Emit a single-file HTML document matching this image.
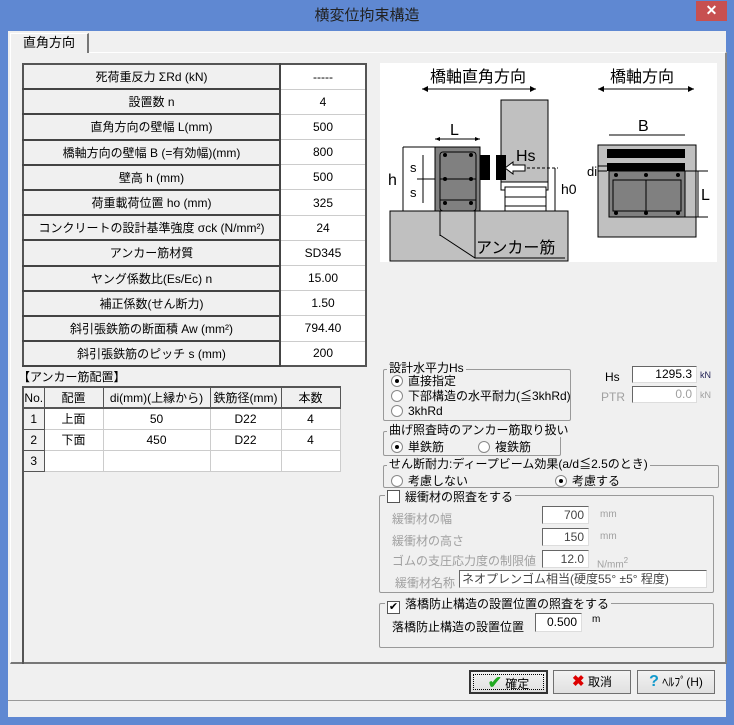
<!DOCTYPE html>
<html><head><meta charset="utf-8"><style>
*{box-sizing:border-box;margin:0;padding:0}
body{width:734px;height:725px;background:#5f88d2;font-family:"Liberation Sans","Noto Sans CJK JP",sans-serif;font-size:12px;color:#000;position:relative;overflow:hidden}
.a{position:absolute}
.win{left:8px;top:31px;width:718px;height:686px;background:#f0f0f0}
.title{left:0;top:0;width:734px;height:31px;text-align:center;font-size:15px;line-height:31px;color:#222}
.close{left:696px;top:1px;width:31px;height:20px;background:#c75050;color:#fff;text-align:center;line-height:19px;font-size:14px;font-weight:bold}
.tab{left:10px;top:33px;width:79px;height:20px;border-top:1px solid #fff;border-left:1px solid #fff;border-right:2px solid #777;font-size:13px;line-height:18px;padding-left:12px;background:#f0f0f0;z-index:2}
.panel{left:10px;top:52px;width:717px;height:612px;border-top:1px solid #fff;border-left:1px solid #fff;border-right:2px solid #888;border-bottom:2px solid #777}
table{border-collapse:collapse;position:absolute}
.t1{left:22px;top:63px;border:2px solid #555}
.t1 td{height:25.2px;font-size:12px;text-align:center;padding:0}
.t1 td.l{width:257px;background:#f0f0f0;border:1px solid #fff;border-right:2px solid #444;border-bottom:2px solid #444}
.t1 td.v{width:86px;background:#fff;border-bottom:1px solid #ccc}
.t2{left:22px;top:386px;border-left:2px solid #555;border-top:2px solid #555}
.t2 td{height:21px;text-align:center;border:1px solid #ccc;background:#fff;padding:0}
.t2 td.h{background:#f0f0f0;border:1px solid #fff;border-right:1px solid #555;border-bottom:2px solid #555}
.grp{border:1px solid #999;border-radius:2px}
.gl{background:#f0f0f0;padding:0 2px;font-size:12px;line-height:13px}
.rd{display:inline-block;width:12px;height:12px;border-radius:50%;border:1px solid #888;background:#fff;vertical-align:-2px;margin-right:5px;position:relative}
.rd.on::after{content:"";position:absolute;left:3px;top:3px;width:4px;height:4px;border-radius:50%;background:#000}
.cb{display:inline-block;width:13px;height:13px;border:1px solid #555;background:#fff;vertical-align:-2px;margin-right:5px;font-size:11px;line-height:11px;text-align:center}
.in{background:#fff;border-top:1px solid #666;border-left:1px solid #666;border-right:1px solid #ddd;border-bottom:1px solid #ddd;text-align:right;padding-right:4px;font-size:12px}
.gray{color:#a0a0a0}
.btn{height:24px;border:1px solid #707070;background:linear-gradient(#f2f2f2,#e0e0e0);text-align:center;line-height:22px;font-size:12px}
</style></head><body>
<div class="a title">横変位拘束構造</div>
<div class="a close">✕</div>
<div class="a win"></div>
<div class="a panel"></div>
<div class="a tab">直角方向</div>

<table class="t1">
<tr><td class="l">死荷重反力 ΣRd (kN)</td><td class="v">-----</td></tr>
<tr><td class="l">設置数 n</td><td class="v">4</td></tr>
<tr><td class="l">直角方向の壁幅 L(mm)</td><td class="v">500</td></tr>
<tr><td class="l">橋軸方向の壁幅 B (=有効幅)(mm)</td><td class="v">800</td></tr>
<tr><td class="l">壁高 h (mm)</td><td class="v">500</td></tr>
<tr><td class="l">荷重載荷位置 ho (mm)</td><td class="v">325</td></tr>
<tr><td class="l">コンクリートの設計基準強度 σck (N/mm²)</td><td class="v">24</td></tr>
<tr><td class="l">アンカー筋材質</td><td class="v">SD345</td></tr>
<tr><td class="l">ヤング係数比(Es/Ec) n</td><td class="v">15.00</td></tr>
<tr><td class="l">補正係数(せん断力)</td><td class="v">1.50</td></tr>
<tr><td class="l">斜引張鉄筋の断面積 Aw (mm²)</td><td class="v">794.40</td></tr>
<tr><td class="l">斜引張鉄筋のピッチ s (mm)</td><td class="v">200</td></tr>
</table>

<div class="a" style="left:18px;top:368px;font-size:12px">【アンカー筋配置】</div>
<div class="a" style="left:22px;top:386px;width:2px;height:278px;background:#555"></div>
<table class="t2">
<tr><td class="h" style="width:21px">No.</td><td class="h" style="width:59px">配置</td><td class="h" style="width:107px">di(mm)(上縁から)</td><td class="h" style="width:71px">鉄筋径(mm)</td><td class="h" style="width:59px">本数</td></tr>
<tr><td class="h" style="border-bottom:1px solid #555">1</td><td>上面</td><td>50</td><td>D22</td><td>4</td></tr>
<tr><td class="h" style="border-bottom:1px solid #555">2</td><td>下面</td><td>450</td><td>D22</td><td>4</td></tr>
<tr><td class="h" style="border-bottom:1px solid #555">3</td><td></td><td></td><td></td><td></td></tr>
</table>

<svg class="a" style="left:380px;top:63px" width="337" height="199" viewBox="0 0 337 199">
<rect width="337" height="199" fill="#fff"/>
<g font-family="Liberation Sans,Noto Sans CJK JP,sans-serif" fill="#000">
<text x="50" y="19" font-size="16">橋軸直角方向</text>
<text x="230" y="19" font-size="16">橋軸方向</text>
<line x1="42" y1="26" x2="156" y2="26" stroke="#000"/><path d="M42 26l6-3v6zM156 26l-6-3v6z"/>
<line x1="218" y1="26" x2="314" y2="26" stroke="#000"/><path d="M218 26l6-3v6zM314 26l-6-3v6z"/>
<rect x="121" y="37" width="47" height="82" fill="#c0c0c0" stroke="#000"/>
<rect x="121" y="119" width="47" height="8" fill="none" stroke="#000"/>
<rect x="125" y="124" width="41" height="40" fill="#fff" stroke="#000"/>
<line x1="125" y1="134" x2="166" y2="134" stroke="#000"/><line x1="125" y1="143" x2="166" y2="143" stroke="#000"/><line x1="125" y1="154" x2="166" y2="154" stroke="#000"/>
<rect x="10" y="148" width="178" height="50" fill="#c0c0c0" stroke="#000"/>
<rect x="55" y="84" width="45" height="64" fill="#808080" stroke="#000"/>
<rect x="60" y="89" width="36" height="59" fill="none" stroke="#000" rx="3"/>
<line x1="60" y1="116" x2="96" y2="116" stroke="#000"/><line x1="60" y1="137" x2="96" y2="137" stroke="#000"/>
<g fill="#000"><circle cx="65" cy="92" r="2"/><circle cx="91" cy="92" r="2"/><circle cx="65" cy="116" r="2"/><circle cx="91" cy="116" r="2"/><circle cx="65" cy="140" r="2"/><circle cx="91" cy="140" r="2"/></g>
<rect x="100" y="92" width="10" height="25" fill="#000"/><rect x="116" y="92" width="10" height="25" fill="#000"/>
<path d="M125 105l8-6v3h12v6h-12v3z" fill="#fff" stroke="#000"/>
<line x1="147" y1="105" x2="178" y2="105" stroke="#000" stroke-dasharray="3 2"/>
<text x="136" y="98" font-size="16">Hs</text>
<line x1="55" y1="76" x2="100" y2="76" stroke="#000"/><path d="M55 76l5-2v4zM100 76l-5-2v4z"/><text x="70" y="72" font-size="16">L</text>
<line x1="23" y1="84" x2="55" y2="84" stroke="#000"/><line x1="23" y1="148" x2="55" y2="148" stroke="#000"/>
<line x1="23" y1="84" x2="23" y2="148" stroke="#000"/><text x="8" y="122" font-size="16">h</text>
<line x1="43" y1="92" x2="43" y2="140" stroke="#000"/><line x1="37" y1="116" x2="55" y2="116" stroke="#000"/>
<text x="30" y="109" font-size="13">s</text><text x="30" y="134" font-size="13">s</text>
<line x1="175" y1="105" x2="175" y2="148" stroke="#000"/><text x="181" y="131" font-size="14">h0</text>
<path d="M60 148v25M95 148v47M60 172l35 23h90" fill="none" stroke="#000"/>
<text x="96" y="190" font-size="16">アンカー筋</text>
<rect x="218" y="82" width="98" height="92" fill="#c0c0c0" stroke="#000"/>
<rect x="227" y="86" width="78" height="9" fill="#000"/>
<rect x="227" y="100" width="78" height="8" fill="#000"/>
<rect x="229" y="108" width="76" height="46" fill="#808080" stroke="#000"/>
<rect x="233" y="117" width="68" height="31" fill="#808080" stroke="#000"/><line x1="266" y1="117" x2="266" y2="148" stroke="#000"/>
<g fill="#000"><circle cx="236" cy="112" r="2"/><circle cx="266" cy="112" r="2"/><circle cx="298" cy="112" r="2"/><circle cx="236" cy="150" r="2"/><circle cx="266" cy="150" r="2"/><circle cx="298" cy="150" r="2"/></g>
<line x1="229" y1="72" x2="305" y2="72" stroke="#000"/><text x="258" y="68" font-size="16">B</text>
<line x1="305" y1="108" x2="328" y2="108" stroke="#000"/><line x1="305" y1="154" x2="328" y2="154" stroke="#000"/><line x1="318" y1="108" x2="318" y2="154" stroke="#000"/><text x="321" y="137" font-size="16">L</text>
<text x="207" y="113" font-size="13">di</text><line x1="218" y1="103" x2="227" y2="103" stroke="#000"/><line x1="218" y1="108" x2="227" y2="108" stroke="#000"/>
</g></svg>

<div class="a grp" style="left:383px;top:369px;width:188px;height:52px"></div>
<div class="a gl" style="left:387px;top:362px">設計水平力Hs</div>
<div class="a" style="left:391px;top:374px;line-height:15px">
<div><span class="rd on"></span>直接指定</div>
<div><span class="rd"></span>下部構造の水平耐力(≦3khRd)</div>
<div><span class="rd"></span>3khRd</div></div>
<div class="a" style="left:605px;top:370px">Hs</div>
<div class="a in" style="left:632px;top:366px;width:65px;height:17px;line-height:15px">1295.3</div>
<div class="a" style="left:700px;top:370px;font-size:9px;color:#225">kN</div>
<div class="a gray" style="left:601px;top:390px">PTR</div>
<div class="a in gray" style="left:632px;top:386px;width:65px;height:17px;line-height:15px">0.0</div>
<div class="a gray" style="left:700px;top:390px;font-size:9px">kN</div>

<div class="a grp" style="left:383px;top:431px;width:178px;height:25px"></div>
<div class="a gl" style="left:387px;top:424px">曲げ照査時のアンカー筋取り扱い</div>
<div class="a" style="left:391px;top:438px"><span class="rd on"></span>単鉄筋</div>
<div class="a" style="left:478px;top:438px"><span class="rd"></span>複鉄筋</div>

<div class="a grp" style="left:383px;top:465px;width:336px;height:23px"></div>
<div class="a gl" style="left:387px;top:458px">せん断耐力:ディープビーム効果(a/d≦2.5のとき)</div>
<div class="a" style="left:391px;top:472px"><span class="rd"></span>考慮しない</div>
<div class="a" style="left:555px;top:472px"><span class="rd on"></span>考慮する</div>

<div class="a grp" style="left:379px;top:495px;width:335px;height:98px"></div>
<div class="a gl" style="left:385px;top:490px"><span class="cb"></span>緩衝材の照査をする</div>
<div class="a gray" style="left:392px;top:510px">緩衝材の幅</div>
<div class="a in" style="left:542px;top:506px;width:47px;height:18px;line-height:16px;color:#444">700</div>
<div class="a gray" style="left:600px;top:509px;font-size:10px">mm</div>
<div class="a gray" style="left:392px;top:532px">緩衝材の高さ</div>
<div class="a in" style="left:542px;top:528px;width:47px;height:18px;line-height:16px;color:#444">150</div>
<div class="a gray" style="left:600px;top:531px;font-size:10px">mm</div>
<div class="a gray" style="left:392px;top:552px">ゴムの支圧応力度の制限値</div>
<div class="a in" style="left:542px;top:550px;width:47px;height:18px;line-height:16px;color:#444">12.0</div>
<div class="a gray" style="left:597px;top:556px;font-size:10px">N/mm<sup style="font-size:8px">2</sup></div>
<div class="a gray" style="left:395px;top:574px">緩衝材名称</div>
<div class="a in" style="left:459px;top:570px;width:248px;height:18px;line-height:16px;text-align:left;padding-left:2px;color:#444">ネオプレンゴム相当(硬度55° ±5° 程度)</div>

<div class="a grp" style="left:379px;top:603px;width:335px;height:45px"></div>
<div class="a gl" style="left:385px;top:598px"><span class="cb">✔</span>落橋防止構造の設置位置の照査をする</div>
<div class="a" style="left:392px;top:618px">落橋防止構造の設置位置</div>
<div class="a in" style="left:535px;top:613px;width:47px;height:19px;line-height:17px">0.500</div>
<div class="a" style="left:592px;top:614px;font-size:10px">m</div>

<div class="a btn" style="left:469px;top:670px;width:79px;border:2px solid #333;outline:1px dotted #000;outline-offset:-5px"><span style="color:#2a2;font-size:17px;font-weight:bold">✔</span> 確定</div>
<div class="a btn" style="left:553px;top:670px;width:78px"><span style="color:#d00;font-size:15px;font-weight:bold">✖</span> 取消</div>
<div class="a btn" style="left:637px;top:670px;width:78px"><span style="color:#19c;font-size:16px;font-weight:bold">?</span> ﾍﾙﾌﾟ(H)</div>
<div class="a" style="left:8px;top:700px;width:718px;height:1px;background:#999"></div>
</body></html>
